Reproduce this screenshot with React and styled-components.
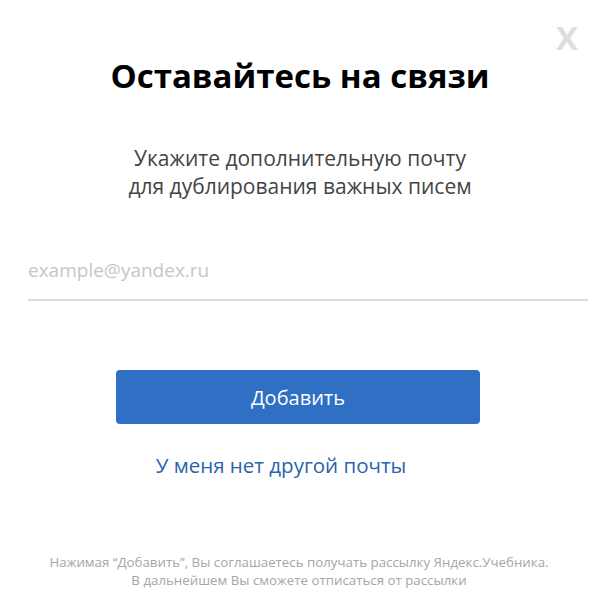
import React from "react";
import styled, { createGlobalStyle } from "styled-components";

const GlobalStyle = createGlobalStyle`
  html, body {
    margin: 0;
    padding: 0;
    background: #ffffff;
  }
  body {
    font-family: "Open Sans", "Noto Sans", sans-serif;
  }
`;

const Modal = styled.div`
  position: relative;
  width: 596px;
  height: 610px;
  box-sizing: border-box;
  padding: 52px 18px 0;
  display: flex;
  flex-direction: column;
  align-items: center;
  background: #fff;
`;

const CloseButton = styled.button`
  position: absolute;
  top: 15px;
  right: 18px;
  border: none;
  background: none;
  padding: 0;
  font-family: "Open Sans", sans-serif;
  font-weight: 700;
  font-size: 33px;
  color: #dedede;
  cursor: pointer;
`;

const Title = styled.h1`
  margin: 0 0 0 4px;
  font-size: 33px;
  font-weight: 700;
  color: #000;
  line-height: 48px;
`;

const Subtitle = styled.p`
  margin: 44px 0 0 4px;
  font-size: 21px;
  line-height: 28px;
  color: #444;
  text-align: center;
`;

const EmailInput = styled.input`
  align-self: stretch;
  margin: 56px -10px 0 10px;
  border: none;
  border-bottom: 2px solid #dddbdb;
  padding: 0 0 15px;
  font-family: "Open Sans", sans-serif;
  font-size: 19px;
  line-height: 28px;
  height: 28px;
  box-sizing: content-box;
  color: #333;
  outline: none;
  &::placeholder {
    color: #c9c5c5;
  }
`;

const PrimaryButton = styled.button`
  margin-top: 69px;
  width: 364px;
  height: 54px;
  border: none;
  border-radius: 4px;
  background: #2f6fc4;
  color: #fff;
  font-family: "Open Sans", sans-serif;
  font-size: 20px;
  cursor: pointer;
`;

const TextLink = styled.a`
  margin: 27px 34px 0 0;
  font-size: 20.5px;
  line-height: 28px;
  color: #2a63ae;
  text-decoration: none;
  cursor: pointer;
`;

const Disclaimer = styled.p`
  margin: 74px 0 0 2px;
  font-size: 13.3px;
  line-height: 18px;
  color: #a6a6a6;
  text-align: center;
`;

export default function App() {
  return (
    <>
      <GlobalStyle />
      <Modal>
        <CloseButton aria-label="Закрыть">X</CloseButton>
        <Title>Оставайтесь на связи</Title>
        <Subtitle>
          Укажите дополнительную почту
          <br />
          для дублирования важных писем
        </Subtitle>
        <EmailInput type="email" placeholder="example@yandex.ru" />
        <PrimaryButton>Добавить</PrimaryButton>
        <TextLink>У меня нет другой почты</TextLink>
        <Disclaimer>
          Нажимая “Добавить”, Вы соглашаетесь получать рассылку Яндекс.Учебника.
          <br />
          В дальнейшем Вы сможете отписаться от рассылки
        </Disclaimer>
      </Modal>
    </>
  );
}
